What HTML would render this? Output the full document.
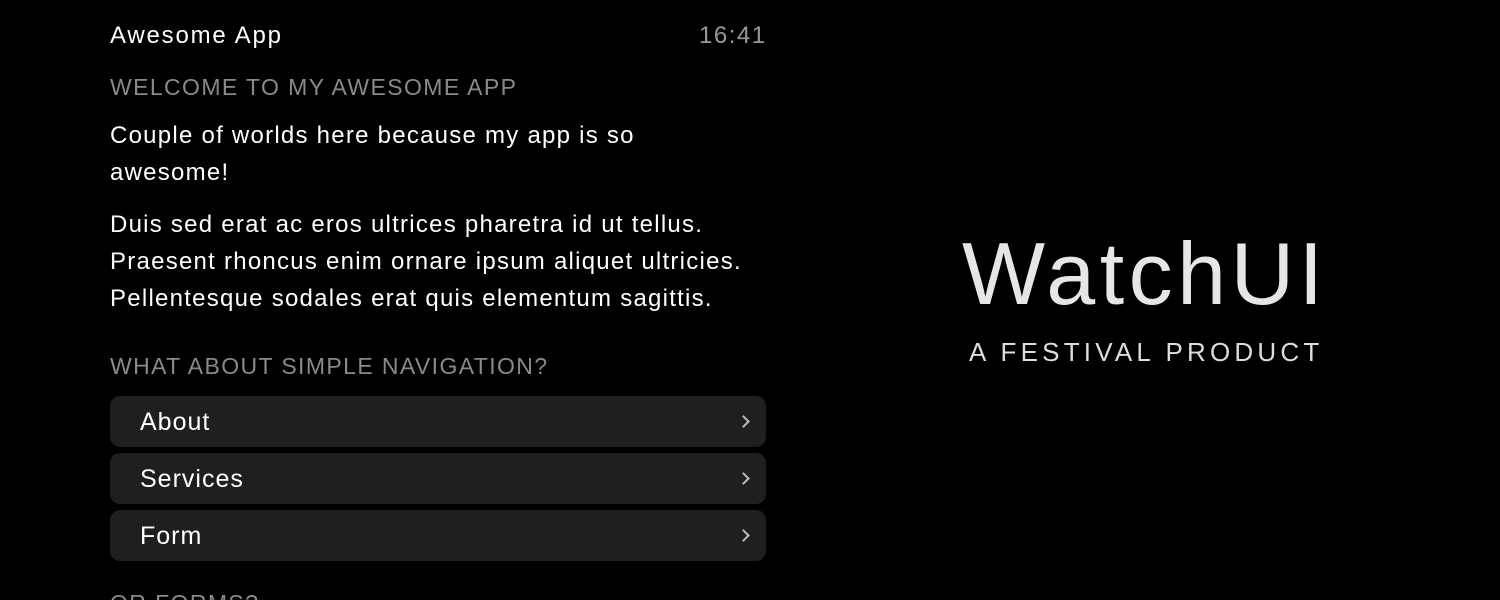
<!DOCTYPE html><html><head><style>
html,body{margin:0;width:1500px;height:600px;overflow:hidden}
body{background:#000;font-family:"Liberation Sans",sans-serif;color:#fff;position:relative}
.a{position:absolute;white-space:nowrap}
.t{font-size:24px;line-height:37px;letter-spacing:1.25px}
.g{color:#8a8a8a;font-size:23px;letter-spacing:1.4px}
.n{position:absolute;left:110px;width:656px;height:51px;background:#1f1f1f;border-radius:10px}
.n span{position:absolute;left:30px;top:12px;font-size:25px;letter-spacing:1px}
.n i{position:absolute;right:18px;top:21px;width:7px;height:7px;border-right:2px solid #bbb;border-top:2px solid #bbb;transform:rotate(45deg)}
</style></head><body>
<div class="a t" style="left:110px;top:17px;letter-spacing:1.8px">Awesome App</div>
<div class="a t" style="left:699px;top:17px;color:#999;letter-spacing:1.5px">16:41</div>
<div class="a g" style="left:110px;top:74px">WELCOME TO MY AWESOME APP</div>
<div class="a t" style="left:110px;top:117px">Couple of worlds here because my app is so<br>awesome!</div>
<div class="a t" style="left:110px;top:206px">Duis sed erat ac eros ultrices pharetra id ut tellus.<br>Praesent rhoncus enim ornare ipsum aliquet ultricies.<br>Pellentesque sodales erat quis elementum sagittis.</div>
<div class="a g" style="left:110px;top:353px">WHAT ABOUT SIMPLE NAVIGATION?</div>
<div class="n" style="top:396px"><span>About</span><i></i></div>
<div class="n" style="top:453px"><span>Services</span><i></i></div>
<div class="n" style="top:510px"><span>Form</span><i></i></div>
<div class="a g" style="left:110px;top:590px">OR FORMS?</div>
<div class="a" style="left:962px;top:224px;font-size:88px;line-height:100px;color:#e6e6e6;letter-spacing:4.5px">WatchUI</div>
<div class="a" style="left:969px;top:337px;font-size:26px;line-height:30px;letter-spacing:4.2px;color:#ddd">A FESTIVAL PRODUCT</div>
</body></html>
